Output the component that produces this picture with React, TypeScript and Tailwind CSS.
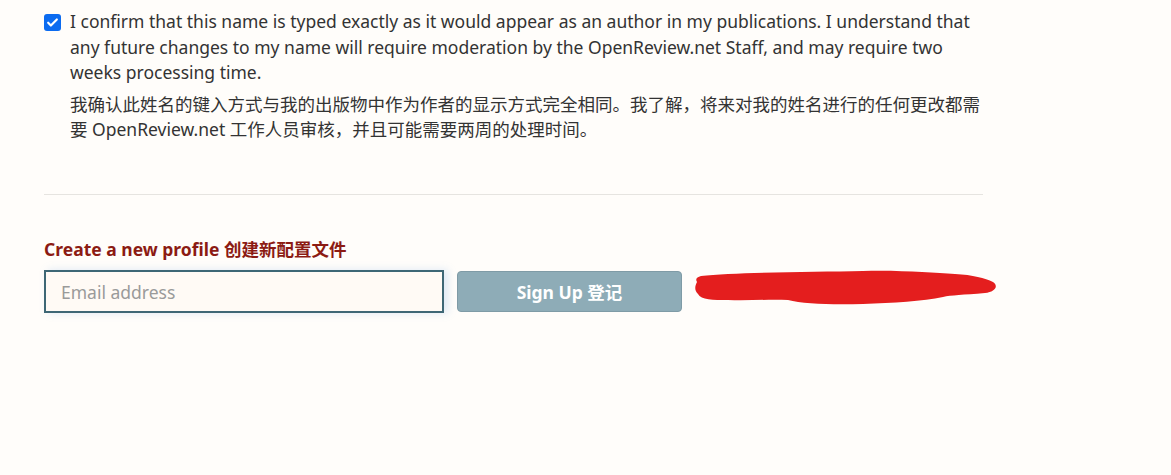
export default function App() {
  return (
    <div
      className="min-h-screen bg-[#fffdfa] pl-[44px] pt-[9px] text-[17.5px] text-[#333333]"
      style={{ fontFamily: '"Noto Sans", "Noto Sans CJK SC", sans-serif' }}
    >
      <div className="w-[939px]">
        <div className="flex items-start">
          <div className="mt-[5px] flex h-[17px] w-[17px] shrink-0 items-center justify-center rounded-[3px] bg-[#0b6bf0]">
            <svg width="13" height="13" viewBox="0 0 24 24" fill="none" stroke="white" strokeWidth="4" strokeLinecap="round" strokeLinejoin="round">
              <path d="M4 12.5l5 5L20 6.5" />
            </svg>
          </div>
          <div className="ml-[9px] leading-[25.6px]">
            <p>
              I confirm that this name is typed exactly as it would appear as an author in my publications. I understand that
              any future changes to my name will require moderation by the OpenReview.net Staff, and may require two
              weeks processing time.
            </p>
            <p className="mt-[6px]">
              我确认此姓名的键入方式与我的出版物中作为作者的显示方式完全相同。我了解，将来对我的姓名进行的任何更改都需要 OpenReview.net 工作人员审核，并且可能需要两周的处理时间。
            </p>
          </div>
        </div>

        <div className="mt-[51px] h-px bg-[#e6e4e0]" />

        <h3 className="mt-[42px] text-[17.5px] font-bold leading-[24px] text-[#8c1b13]">Create a new profile 创建新配置文件</h3>

        <div className="mt-[9px] flex items-center">
          <input
            type="text"
            placeholder="Email address"
            className="h-[43px] w-[400px] shrink-0 border-2 border-[#3e6775] bg-[#fffaf5] px-[15px] text-[17.5px] text-[#333] shadow-[4px_0_8px_rgba(120,170,230,0.25)] outline-none placeholder:text-[#9a9a9a]"
          />
          <button className="ml-[13px] h-[41px] w-[225px] shrink-0 rounded-[4px] border border-[#7f9ba6] bg-[#8eacb7] text-[17.5px] font-bold text-white">
            Sign Up 登记
          </button>
          <svg className="ml-[11px] shrink-0" width="305" height="44" viewBox="0 0 305 44">
            <path
              fill="#e41e1e"
              d="M8 6 C40 2 120 2 170 1 C210 0 240 3 262 4 C280 5 292 8 300 12 C306 16 302 22 292 23 C270 25 258 25 250 27 C230 31 200 33 170 34 C140 35 110 34 95 30 C75 29 55 31 35 30 C20 30 8 30 5 24 C1 20 2 16 4 12 C2 9 4 7 8 6 Z"
            />
          </svg>
        </div>
      </div>
    </div>
  )
}
